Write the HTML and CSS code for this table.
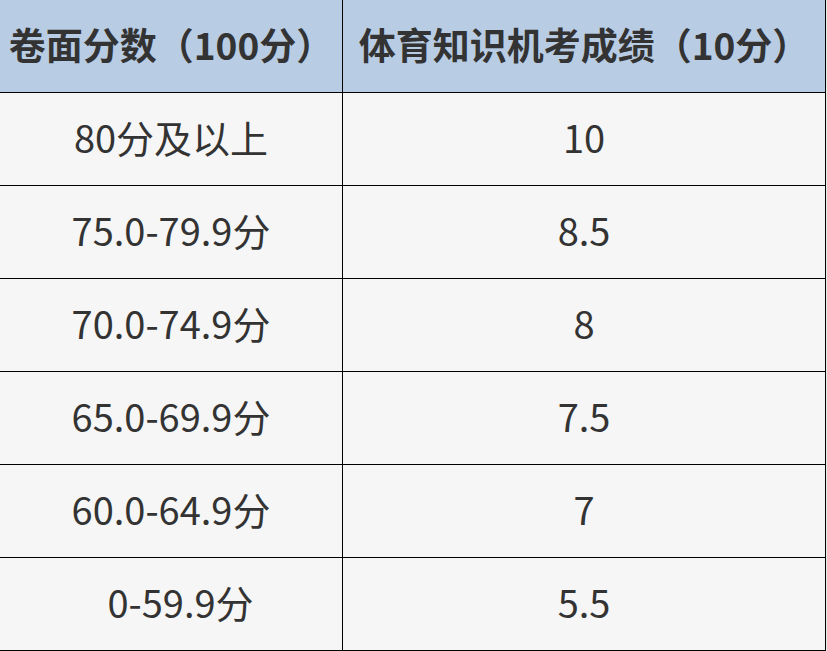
FILE: index.html
```html
<!DOCTYPE html>
<html lang="zh-CN">
<head>
<meta charset="utf-8">
<link rel="stylesheet" href="styles.css">
</head>
<body>
<div class="table">
  <div class="cell head">卷面分数（100分）</div>
  <div class="cell head">体育知识机考成绩（10分）</div>
  <div class="cell">80分及以上</div>
  <div class="cell">10</div>
  <div class="cell">75.0-79.9分</div>
  <div class="cell">8.5</div>
  <div class="cell">70.0-74.9分</div>
  <div class="cell">8</div>
  <div class="cell">65.0-69.9分</div>
  <div class="cell">7.5</div>
  <div class="cell">60.0-64.9分</div>
  <div class="cell">7</div>
  <div class="cell">&ensp;0-59.9分</div>
  <div class="cell">5.5</div>
</div>
</body>
</html>
```
FILE: styles.css
```css
html, body {
  margin: 0;
  padding: 0;
  background: #e4efe4;
}
body {
  width: 827px;
  height: 651px;
  overflow: hidden;
  font-family: "Noto Sans CJK SC", "Noto Sans", sans-serif;
  color: #333333;
}
.table {
  display: grid;
  grid-template-columns: 343px 483px;
  grid-auto-rows: 93px;
  width: 826px;
}
.cell {
  display: flex;
  align-items: center;
  justify-content: center;
  padding-bottom: 5px;
  background: #f6f6f6;
  border-right: 1px solid #000;
  border-bottom: 1px solid #000;
  font-size: 38px;
  white-space: pre;
  line-height: 1;
}
.cell.head {
  background: #b8cce4;
  font-weight: bold;
  font-size: 37px;
  padding-bottom: 4px;
}
```
